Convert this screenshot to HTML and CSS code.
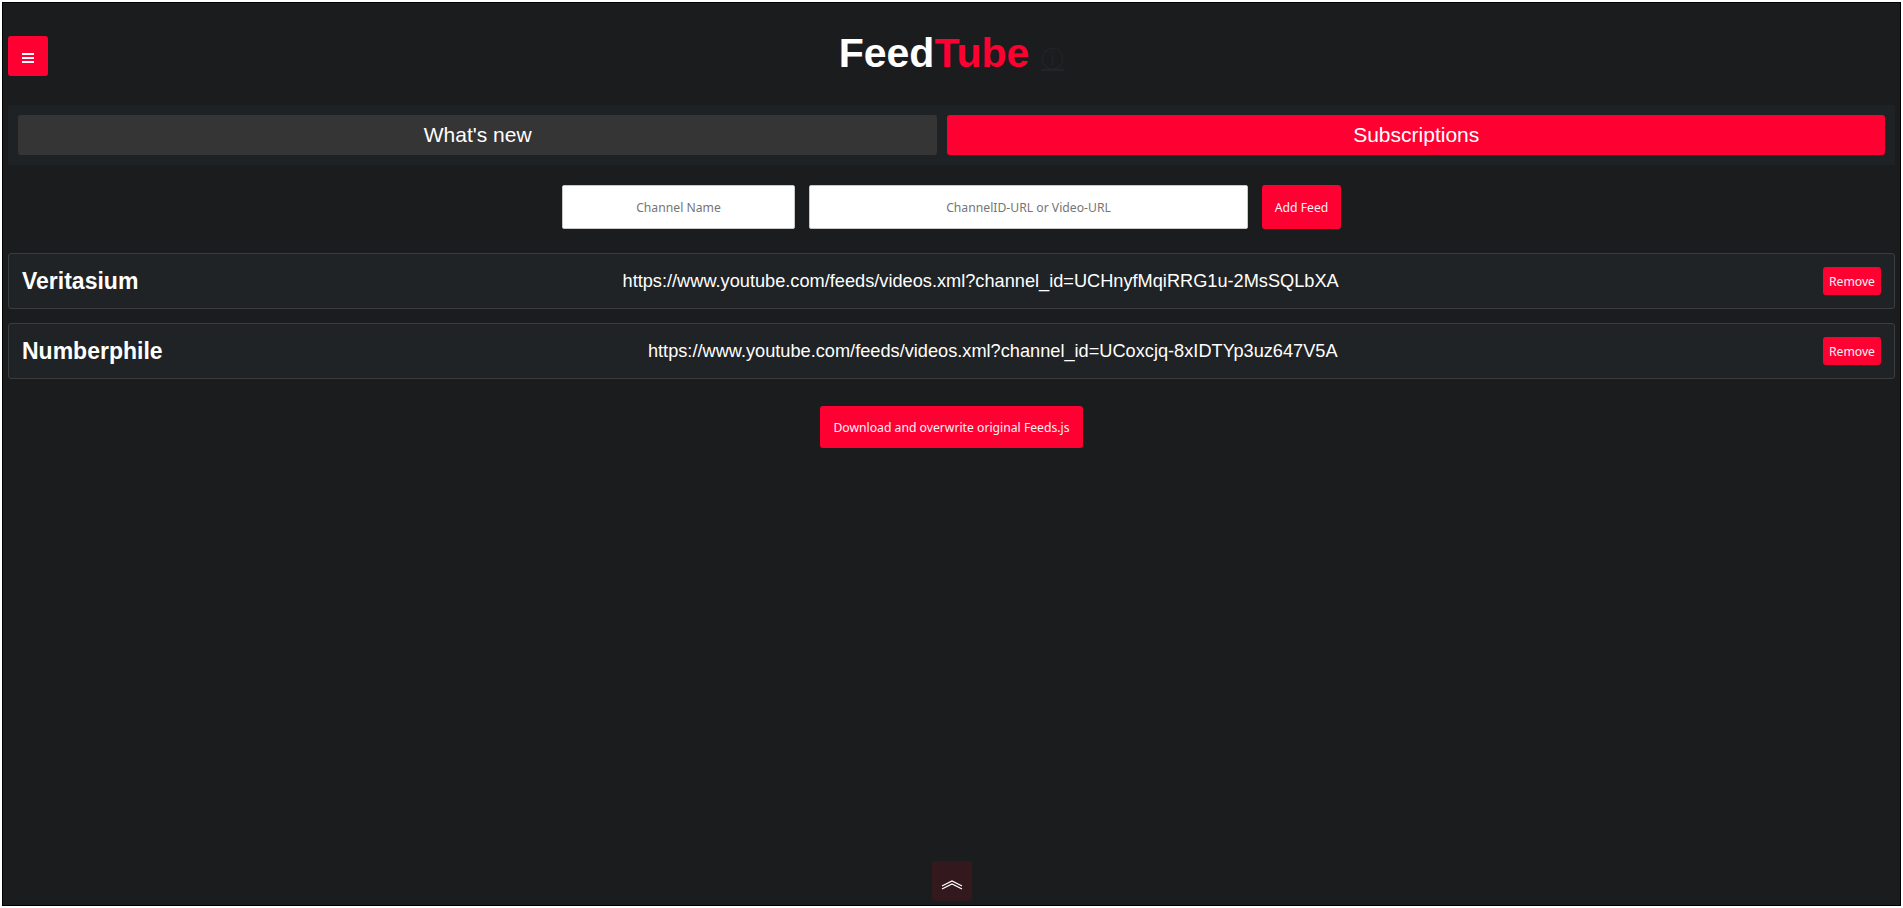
FILE: index.html
```html
<!DOCTYPE html>
<html lang="en">
<head>
<meta charset="utf-8">
<title>FeedTube</title>
<link rel="stylesheet" href="styles.css">
</head>
<body>
<div class="app">
  <button class="menu-btn" aria-label="Menu">
    <svg width="12" height="10" viewBox="0 0 12 10"><rect x="0" y="0" width="12" height="2" fill="#fff"/><rect x="0" y="4" width="12" height="2" fill="#fff"/><rect x="0" y="8" width="12" height="2" fill="#fff"/></svg>
  </button>
  <header class="header">
    <h1 class="title"><span class="t-feed">Feed</span><span class="t-tube">Tube</span><a class="info" href="#">ⓘ</a></h1>
  </header>
  <nav class="tabs">
    <div class="tab">What's new</div>
    <div class="tab tab-active">Subscriptions</div>
  </nav>
  <form class="add-form">
    <input class="field field-name" type="text" placeholder="Channel Name">
    <input class="field field-url" type="text" placeholder="ChannelID-URL or Video-URL">
    <button type="button" class="btn btn-add">Add Feed</button>
  </form>
  <div class="feeds">
    <div class="feed">
      <div class="feed-name">Veritasium</div>
      <div class="feed-url">https://www.youtube.com/feeds/videos.xml?channel_id=UCHnyfMqiRRG1u-2MsSQLbXA</div>
      <button class="btn btn-remove">Remove</button>
    </div>
    <div class="feed">
      <div class="feed-name">Numberphile</div>
      <div class="feed-url">https://www.youtube.com/feeds/videos.xml?channel_id=UCoxcjq-8xIDTYp3uz647V5A</div>
      <button class="btn btn-remove">Remove</button>
    </div>
  </div>
  <div class="download-wrap">
    <button class="btn btn-download">Download and overwrite original Feeds.js</button>
  </div>
  <button class="top-btn" aria-label="Back to top">
    <svg width="22" height="10" viewBox="0 0 22 10"><polyline points="1,6 11,1 21,6" fill="none" stroke="#fff" stroke-width="1.2"/><polyline points="1,9 11,4 21,9" fill="none" stroke="#fff" stroke-width="1.2"/></svg>
  </button>
</div>
</body>
</html>
```

FILE: styles.css
```css
html {
  background: #ffffff;
}
body {
  margin: 0;
  padding: 2px;
  box-sizing: border-box;
  height: 100vh;
}
.app {
  position: relative;
  box-sizing: border-box;
  height: 100%;
  border: 1px solid #000;
  background: #1b1c1e;
  padding: 0 5px;
  font-family: "Liberation Sans", Arial, sans-serif;
  color: #fff;
  overflow: hidden;
}
.menu-btn {
  position: absolute;
  top: 33px;
  left: 5px;
  width: 40px;
  height: 40px;
  border: 0;
  border-radius: 3px;
  background: #ff0033;
  display: flex;
  align-items: center;
  justify-content: center;
  padding: 4px 0 0;
  cursor: pointer;
}
.header {
  padding: 27px 0 29px;
  text-align: center;
}
.title {
  margin: 0;
  font-size: 41px;
  line-height: 46px;
  font-weight: bold;
}
.t-feed { color: #ffffff; }
.t-tube { color: #ff0033; }
.info {
  font-family: "DejaVu Sans", sans-serif;
  font-weight: normal;
  font-size: 23px;
  line-height: 0;
  color: #222427;
  text-decoration: underline;
  margin-left: 12px;
}
.tabs {
  display: flex;
  gap: 10px;
  padding: 10px;
  background: #1f2224;
}
.tab {
  flex: 1 1 auto;
  height: 40px;
  display: flex;
  align-items: center;
  justify-content: center;
  background: #353535;
  border-radius: 3px;
  font-size: 21px;
  color: #fff;
}
.tab-active {
  background: #ff0033;
}
.add-form {
  display: flex;
  justify-content: center;
  gap: 14px;
  margin: 20px 0 24px;
}
.field {
  box-sizing: border-box;
  height: 44px;
  border: 1px solid #c8c8c8;
  border-radius: 2px;
  background: #fff;
  text-align: center;
  font-family: "Noto Sans", sans-serif;
  font-size: 12.2px;
  padding: 0 6px;
}
.field::placeholder {
  color: #757575;
}
.field-name { width: 233px; }
.field-url { width: 439px; }
.btn {
  border: 0;
  border-radius: 3px;
  background: #ff0033;
  color: #f4f4f4;
  font-family: "Noto Sans", sans-serif;
  font-size: 12.2px;
  cursor: pointer;
}
.btn-add {
  width: 79px;
  height: 44px;
  padding: 0;
}
.feeds {
  display: flex;
  flex-direction: column;
  gap: 14px;
}
.feed {
  box-sizing: border-box;
  height: 56px;
  display: flex;
  align-items: center;
  justify-content: space-between;
  padding: 0 13px;
  background: #202325;
  border: 1px solid #3a3c3e;
  border-radius: 3px;
}
.feed-name {
  font-size: 23px;
  font-weight: bold;
}
.feed-url {
  font-size: 18.2px;
}
.btn-remove {
  height: 28px;
  padding: 0 6px;
}
.download-wrap {
  display: flex;
  justify-content: center;
  margin-top: 27px;
}
.btn-download {
  height: 42px;
  padding: 0 13px;
}
.top-btn {
  position: absolute;
  bottom: 4px;
  left: calc(50% - 20px);
  width: 40px;
  height: 40px;
  border: 0;
  border-radius: 3px;
  background: #33191e;
  display: flex;
  align-items: center;
  justify-content: center;
  padding: 8px 0 0;
}
```
